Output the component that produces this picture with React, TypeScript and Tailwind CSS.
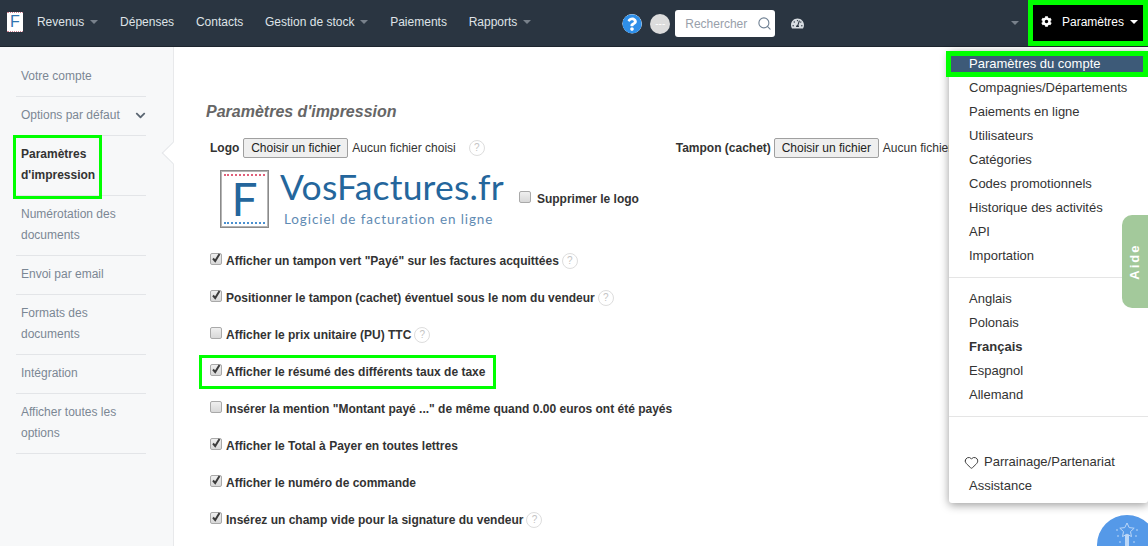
import { Search, Heart } from "lucide-react";
import { FaCog, FaChevronDown, FaQuestionCircle, FaTachometerAlt } from "react-icons/fa";

const navItems = [
  { label: "Revenus", caret: true },
  { label: "Dépenses" },
  { label: "Contacts" },
  { label: "Gestion de stock", caret: true },
  { label: "Paiements" },
  { label: "Rapports", caret: true },
];

const sideItems = [
  { label: ["Votre compte"] },
  { label: ["Options par défaut"], chevron: true },
  { label: ["Paramètres", "d'impression"], active: true },
  { label: ["Numérotation des", "documents"] },
  { label: ["Envoi par email"] },
  { label: ["Formats des", "documents"] },
  { label: ["Intégration"] },
  { label: ["Afficher toutes les", "options"] },
];

const options = [
  { label: 'Afficher un tampon vert "Payé" sur les factures acquittées', checked: true, help: true },
  { label: "Positionner le tampon (cachet) éventuel sous le nom du vendeur", checked: true, help: true },
  { label: "Afficher le prix unitaire (PU) TTC", help: true },
  { label: "Afficher le résumé des différents taux de taxe", checked: true, boxed: true },
  { label: 'Insérer la mention "Montant payé ..." de même quand 0.00 euros ont été payés' },
  { label: "Afficher le Total à Payer en toutes lettres", checked: true },
  { label: "Afficher le numéro de commande", checked: true },
  { label: "Insérez un champ vide pour la signature du vendeur", checked: true, help: true },
];

const menuTop = ["Compagnies/Départements", "Paiements en ligne", "Utilisateurs", "Catégories", "Codes promotionnels", "Historique des activités", "API", "Importation"];
const languages = ["Anglais", "Polonais", "Français", "Espagnol", "Allemand"];

function Caret({ className }: { className: string }) {
  return <span className={`inline-block h-0 w-0 border-x-[4px] border-t-[4px] border-x-transparent ${className}`} />;
}

function Help({ className = "" }: { className?: string }) {
  return (
    <span className={`flex h-4 w-4 items-center justify-center rounded-full border border-[#dddddd] text-[10px] font-normal text-[#c4c4c4] ${className}`}>
      ?
    </span>
  );
}

function Checkbox({ checked }: { checked?: boolean }) {
  return (
    <span className="relative block h-3 w-3 shrink-0 -translate-y-[2px] rounded-[2px] border border-[#a9a9a9] bg-gradient-to-b from-[#efefef] to-[#d8d8d8]">
      {checked && (
        <svg viewBox="0 0 12 12" className="absolute -left-px -top-[2px] h-3 w-3">
          <path d="M3 6.5 5.2 9 9.5 2" fill="none" stroke="#3c3c3c" strokeWidth="2" />
        </svg>
      )}
    </span>
  );
}

function FileButton() {
  return (
    <button type="button" className="h-5 w-[105px] rounded-[2px] border border-[#a0a0a0] bg-[#efefef] text-xs text-[#222222]">
      Choisir un fichier
    </button>
  );
}

function Logo() {
  return (
    <div className="flex items-start">
      <div className="flex h-[58px] w-[49px] flex-col justify-between border border-[#8a8a8a] bg-white px-[3px] py-[3px] [box-shadow:inset_0_0_0_1px_#b5b5b5]">
        <span className="block border-t-2 border-dotted border-[#e0607a]" />
        <span className="text-center font-['Lato',sans-serif] text-[46px] leading-[42px] text-[#24669c]">F</span>
        <span className="block border-t-2 border-dotted border-[#4a90d0]" />
      </div>
      <div className="ml-[11px] flex flex-col">
        <span className="mt-[-2px] font-['Lato',sans-serif] text-[35.5px] leading-[38px] tracking-[0.2px] text-[#24669c]">VosFactures.fr</span>
        <span className="ml-[4px] mt-[4px] font-['Lato',sans-serif] text-[13.5px] leading-[18px] tracking-[0.9px] text-[#5f8bb3]">
          Logiciel de facturation en ligne
        </span>
      </div>
    </div>
  );
}

function Wand() {
  return (
    <svg viewBox="0 0 30 30" className="h-[30px] w-[30px]" fill="none" stroke="#bcd7f7" strokeWidth="1">
      <path d="M15 3l2.2 4.6 5 .6-3.7 3.4 1 5-4.5-2.5-4.5 2.5 1-5-3.7-3.4 5-.6z" />
      <path d="M13.5 15h3v15h-3z" fill="#bcd7f7" />
      <path d="M4 10h2M24 10h2M5 16h2M23 16h2M7 22h2M21 22h2" />
    </svg>
  );
}

export default function App() {
  return (
    <div className="relative flex h-[546px] w-[1148px] flex-col overflow-hidden bg-white font-['Liberation_Sans',Arial,sans-serif] text-xs text-[#333333]">
      <header className="flex h-[47px] shrink-0 items-stretch border-b border-[#1d252e] bg-[#2a3541]">
        <div className="ml-[7px] mr-[3px] mt-3 flex h-5 w-4 items-center justify-center border-y border-dotted border-[#d08090] bg-white text-base leading-none text-[#2f75b0]">
          F
        </div>
        <nav className="flex items-center">
          {navItems.map((item) => (
            <a key={item.label} className="flex items-center gap-[6px] whitespace-nowrap px-[10.9px] pb-[3px] text-[#dfe3e7]">
              {item.label}
              {item.caret && <Caret className="border-t-[#78818b]" />}
            </a>
          ))}
        </nav>
        <div className="ml-[80px] flex items-center pt-[1px]">
          <FaQuestionCircle className="h-[20px] w-[20px] rounded-full bg-white text-[#2f8fe8] [clip-path:circle(50%)]" />
          <span className="ml-[8px] flex h-5 w-5 items-center justify-center rounded-full bg-[#dcdcdc] text-[10px] leading-none text-white">
            ---
          </span>
          <div className="ml-[5px] flex h-[27px] w-[100px] items-center justify-between rounded-[3px] bg-white pl-[10px] pr-[3px] text-[#98a0aa]">
            Rechercher
            <Search className="h-[15px] w-[15px] text-[#6f8093]" strokeWidth={1.75} />
          </div>
          <FaTachometerAlt className="ml-[16px] h-[13px] w-[13px] text-[#d8dde2]" />
        </div>
        <Caret className="ml-auto mr-[9px] self-center border-t-[#78818b]" />
        <a className="flex w-[120px] items-center border-[5px] border-[#00ff00] bg-black pb-[3px] pl-[8px] text-white">
          <FaCog className="h-[11px] w-[11px]" />
          <span className="ml-[10px]">Paramètres</span>
          <Caret className="ml-[6px] border-t-white" />
        </a>
      </header>

      <div className="flex min-h-0 flex-1">
        <aside className="relative w-[174px] shrink-0 border-r border-[#e8e9eb] bg-[#f7f8f9] pt-[11px]">
          {sideItems.map((item) => (
            <div
              key={item.label[0]}
              className={`relative ml-4 w-[130px] border-b border-[#e3e5e8] pb-[9px] pt-[8px] pl-[5px] leading-[21px] ${item.active ? "font-bold text-[#333333]" : "text-[#7b8794]"}`}
            >
              {item.label.map((line) => (
                <div key={line}>{line}</div>
              ))}
              {item.chevron && <FaChevronDown className="absolute right-0 top-[13px] h-[11px] w-[11px] text-[#5b6672]" />}
              {item.active && <span className="absolute -left-[3px] -top-px h-[64px] w-[89px] border-[3px] border-[#00ff00]" />}
            </div>
          ))}
          <span className="absolute left-[165px] top-[98px] h-4 w-4 rotate-45 border-b border-l border-[#e4e6e9] bg-white" />
        </aside>

        <main className="min-w-0 flex-1 pl-8">
          <h2 className="mt-[55px] text-base font-bold italic leading-[20px] text-[#666666]">Paramètres d'impression</h2>
          <div className="ml-[4px] mt-[16px] flex items-center whitespace-nowrap">
            <span className="font-bold">Logo</span>
            <span className="ml-[4px]"><FileButton /></span>
            <span className="ml-[4px]">Aucun fichier choisi</span>
            <Help className="ml-[13px]" />
            <span className="ml-[191px] font-bold">Tampon (cachet)</span>
            <span className="ml-[3px]"><FileButton /></span>
            <span className="ml-[4px]">Aucun fichier choisi</span>
          </div>
          <div className="ml-[14px] mt-[12px] flex items-start">
            <Logo />
            <label className="ml-[15px] mt-[21px] flex items-center gap-[6px] font-bold">
              <Checkbox />
              Supprimer le logo
            </label>
          </div>
          <div className="ml-[4px] mt-[14px]">
            {options.map((opt) => (
              <div key={opt.label} className="flex h-[37px] items-center font-bold">
                <div className="relative flex items-center gap-[4px]">
                  <Checkbox checked={opt.checked} />
                  <span>{opt.label}</span>
                  {opt.help && <Help className="-ml-px" />}
                  {opt.boxed && <span className="absolute -inset-x-[11px] -inset-y-[9px] border-[3px] border-[#00ff00]" />}
                </div>
              </div>
            ))}
          </div>
        </main>
      </div>

      {/* Settings menu */}
      <div className="absolute left-[949px] top-[51px] w-[199px] rounded-[3px] bg-white pb-[5px] text-[13px] shadow-[0_2px_10px_rgba(0,0,0,0.4)]">
        <div className="relative -ml-[3px] h-[26px] border-[5px] border-[#00ff00] bg-[#3d5a78] pl-[18px] leading-[16px] text-white">
          Paramètres du compte
        </div>
        <div className="-mt-px border-b border-[#e5e5e5] pb-[9px]">
          {menuTop.map((label) => (
            <div key={label} className="pl-5 leading-6">{label}</div>
          ))}
        </div>
        <div className="border-b border-[#e5e5e5] py-[9px]">
          {languages.map((label) => (
            <div key={label} className={`pl-5 leading-6 ${label === "Français" ? "font-bold" : ""}`}>{label}</div>
          ))}
        </div>
        <div className="flex items-center pl-[15px] pt-[33px] leading-6">
          <Heart className="mr-[5px] h-[15px] w-[15px]" strokeWidth={1.5} />
          Parrainage/Partenariat
        </div>
        <div className="pl-5 leading-6">Assistance</div>
      </div>

      <div className="absolute left-[1122px] top-[215px] flex h-[93px] w-[26px] items-center justify-center rounded-l-[10px] bg-[#a3c99b]">
        <span className="-rotate-90 text-[13px] font-bold tracking-[2px] text-white">Aide</span>
      </div>

      <div className="absolute left-[1097px] top-[515px] flex h-[60px] w-[60px] justify-center rounded-full bg-[#5599e8] pt-[5px]">
        <Wand />
      </div>
    </div>
  );
}
